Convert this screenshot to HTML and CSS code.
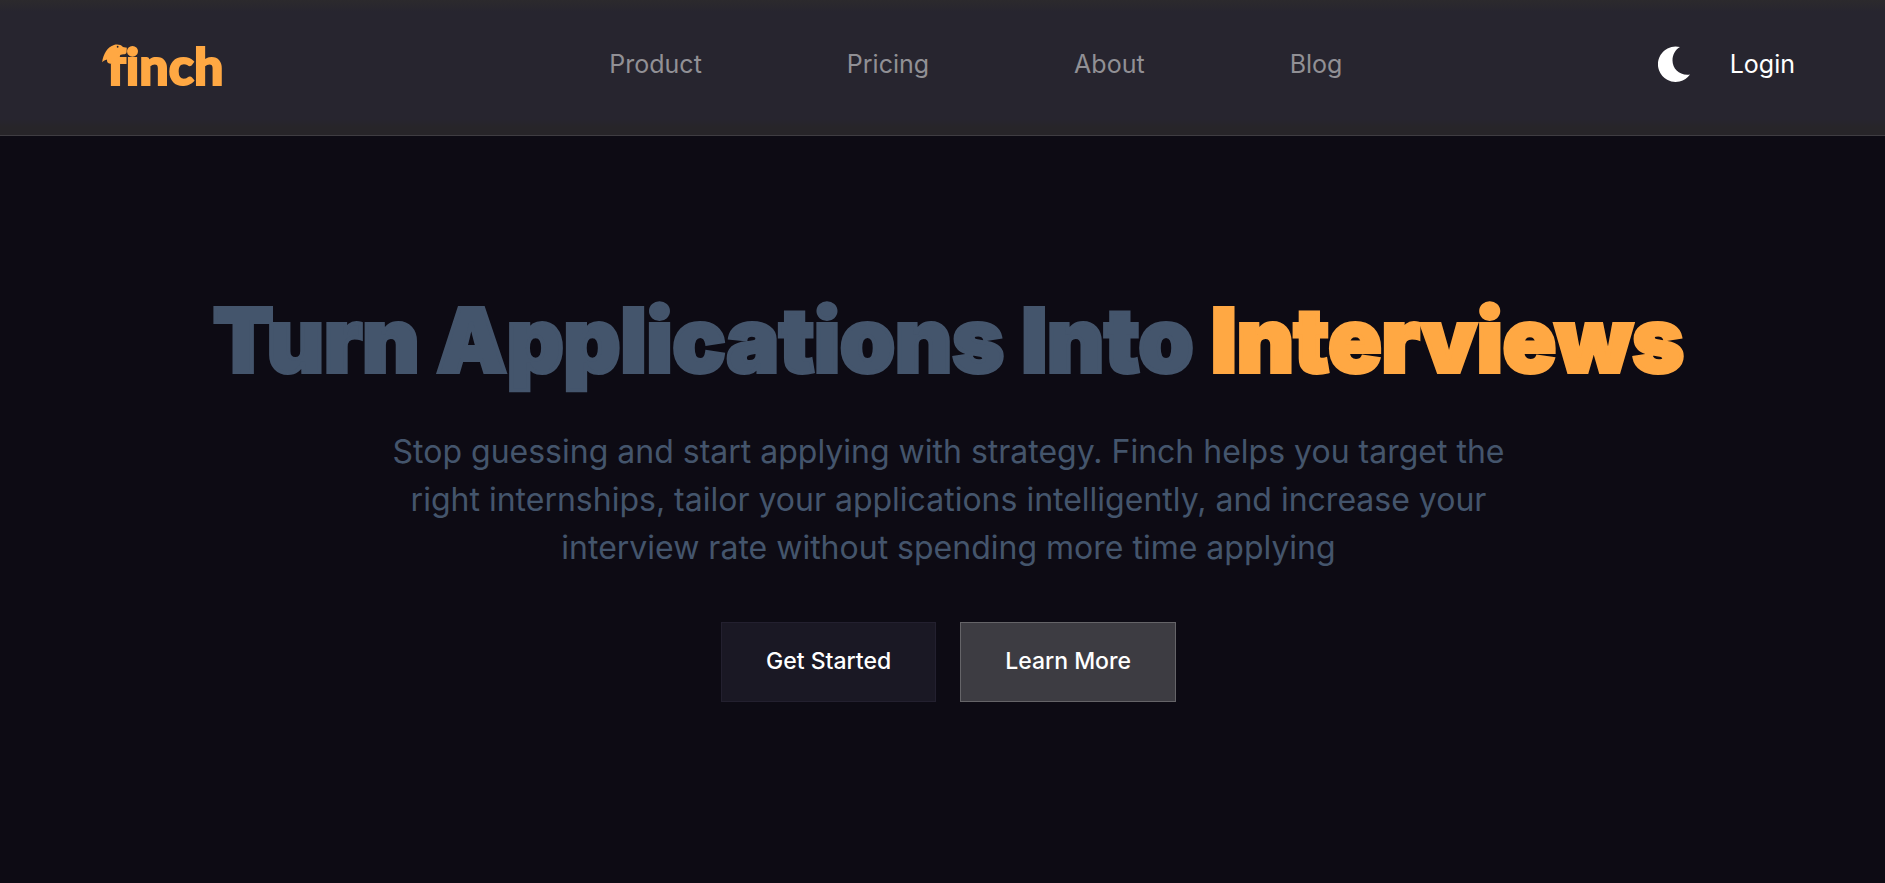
FILE: index.html
```html
<!DOCTYPE html>
<html lang="en">
<head>
<meta charset="utf-8">
<meta name="viewport" content="width=device-width, initial-scale=1">
<title>Finch</title>
<link rel="stylesheet" href="styles.css">
</head>
<body>
<header class="site-header">
  <a class="logo" href="#">
    <span class="logo-mark">
      <span class="logo-text">finch</span>
      <svg class="logo-bird" viewBox="0 0 26 22" aria-hidden="true">
        <path class="bird-body" d="M0 20C1 11 6 3 13 1C20-1 25 3 25 10C24 9 22 9 20 9C19 10 20 11 19 13C18 15 15 16 14 16L6 17C4 17 2 18 0 20Z"/>
        <circle class="bird-eye" cx="17" cy="3" r="1"/>
      </svg>
    </span>
  </a>
  <nav class="nav" aria-label="Main">
    <a href="#">Product</a>
    <a href="#">Pricing</a>
    <a href="#">About</a>
    <a href="#">Blog</a>
  </nav>
  <div class="actions">
    <button class="theme-toggle" type="button" aria-label="Toggle theme">
      <svg viewBox="0 0 32 36" aria-hidden="true"><path d="M22 1A17.700 17.700 0 1 0 32 28.500C22 30 14.500 23 14.500 14.500C14.500 8.500 17.500 3.500 22 1Z"/></svg>
    </button>
    <a class="login" href="#">Login</a>
  </div>
</header>
<main class="hero">
  <h1 class="title">Turn Applications Into <span class="accent">Interviews</span></h1>
  <p class="lead">Stop guessing and start applying with strategy. Finch helps you target the right internships, tailor your applications intelligently, and increase your interview rate without spending more time applying</p>
  <div class="buttons">
    <button class="btn btn-primary" type="button">Get Started</button>
    <button class="btn btn-secondary" type="button">Learn More</button>
  </div>
</main>
</body>
</html>
```
FILE: styles.css
```css
* {
  box-sizing: border-box;
}

body {
  margin: 0;
  min-height: 100vh;
  background: #0d0b14;
  color: #fff;
  font-family: Inter, "Liberation Sans", sans-serif;
}

a {
  color: inherit;
  text-decoration: none;
}

button {
  font: inherit;
  color: inherit;
  cursor: pointer;
}

.site-header {
  display: flex;
  align-items: center;
  justify-content: space-between;
  padding: 32px 90px 39px 102px;
  border-bottom: 1px solid #3f3d42;
  background: linear-gradient(#2c2a2d, #27252f 12px, #27252f calc(100% - 16px), #272529 calc(100% - 8px));
}

.logo {
  min-width: 192px;
  color: #ffa843;
}

.logo-mark {
  position: relative;
  display: block;
  width: max-content;
  padding-left: 5px;
}

.logo-text {
  display: block;
  padding-top: 2px;
  font-family: Lato, sans-serif;
  font-size: 52px;
  font-weight: 900;
  font-variant-ligatures: none;
  line-height: 62px;
  -webkit-text-stroke: 2px #ffa843;
}

.logo-bird {
  position: absolute;
  top: 12px;
  left: 0;
  width: 24px;
  height: 20px;
}

.bird-body {
  fill: #ffa843;
}

.bird-eye {
  fill: #27252f;
}

.nav {
  display: flex;
  gap: 145px;
  color: #919095;
  font-size: 25px;
  line-height: 32px;
}

.actions {
  display: flex;
  align-items: center;
  gap: 40px;
}

.theme-toggle {
  display: flex;
  padding: 0;
  border: 0;
  background: none;
}

.theme-toggle svg {
  width: 32px;
  height: 36px;
  fill: #fff;
}

.login {
  font-size: 25px;
  line-height: 32px;
}

.hero {
  display: flex;
  flex-direction: column;
  align-items: center;
  padding: 144px 0 80px 12px;
  text-align: center;
}

.title {
  margin: 0;
  color: #44556c;
  font-size: 88px;
  font-weight: 900;
  line-height: 120px;
  -webkit-text-stroke: 4px currentColor;
}

.accent {
  color: #ffa843;
}

.lead {
  max-width: 1140px;
  margin: 28px 0 50px;
  color: #44556c;
  font-size: 32px;
  line-height: 48px;
}

.buttons {
  display: flex;
  gap: 24px;
}

.btn {
  padding: 24px 44px 26px;
  border: 1px solid;
  font-size: 23px;
  font-weight: 500;
  line-height: 28px;
}

.btn-primary {
  border-color: #23202f;
  background: #1a1824;
}

.btn-secondary {
  border-color: #656468;
  background: #3d3c42;
}
```
